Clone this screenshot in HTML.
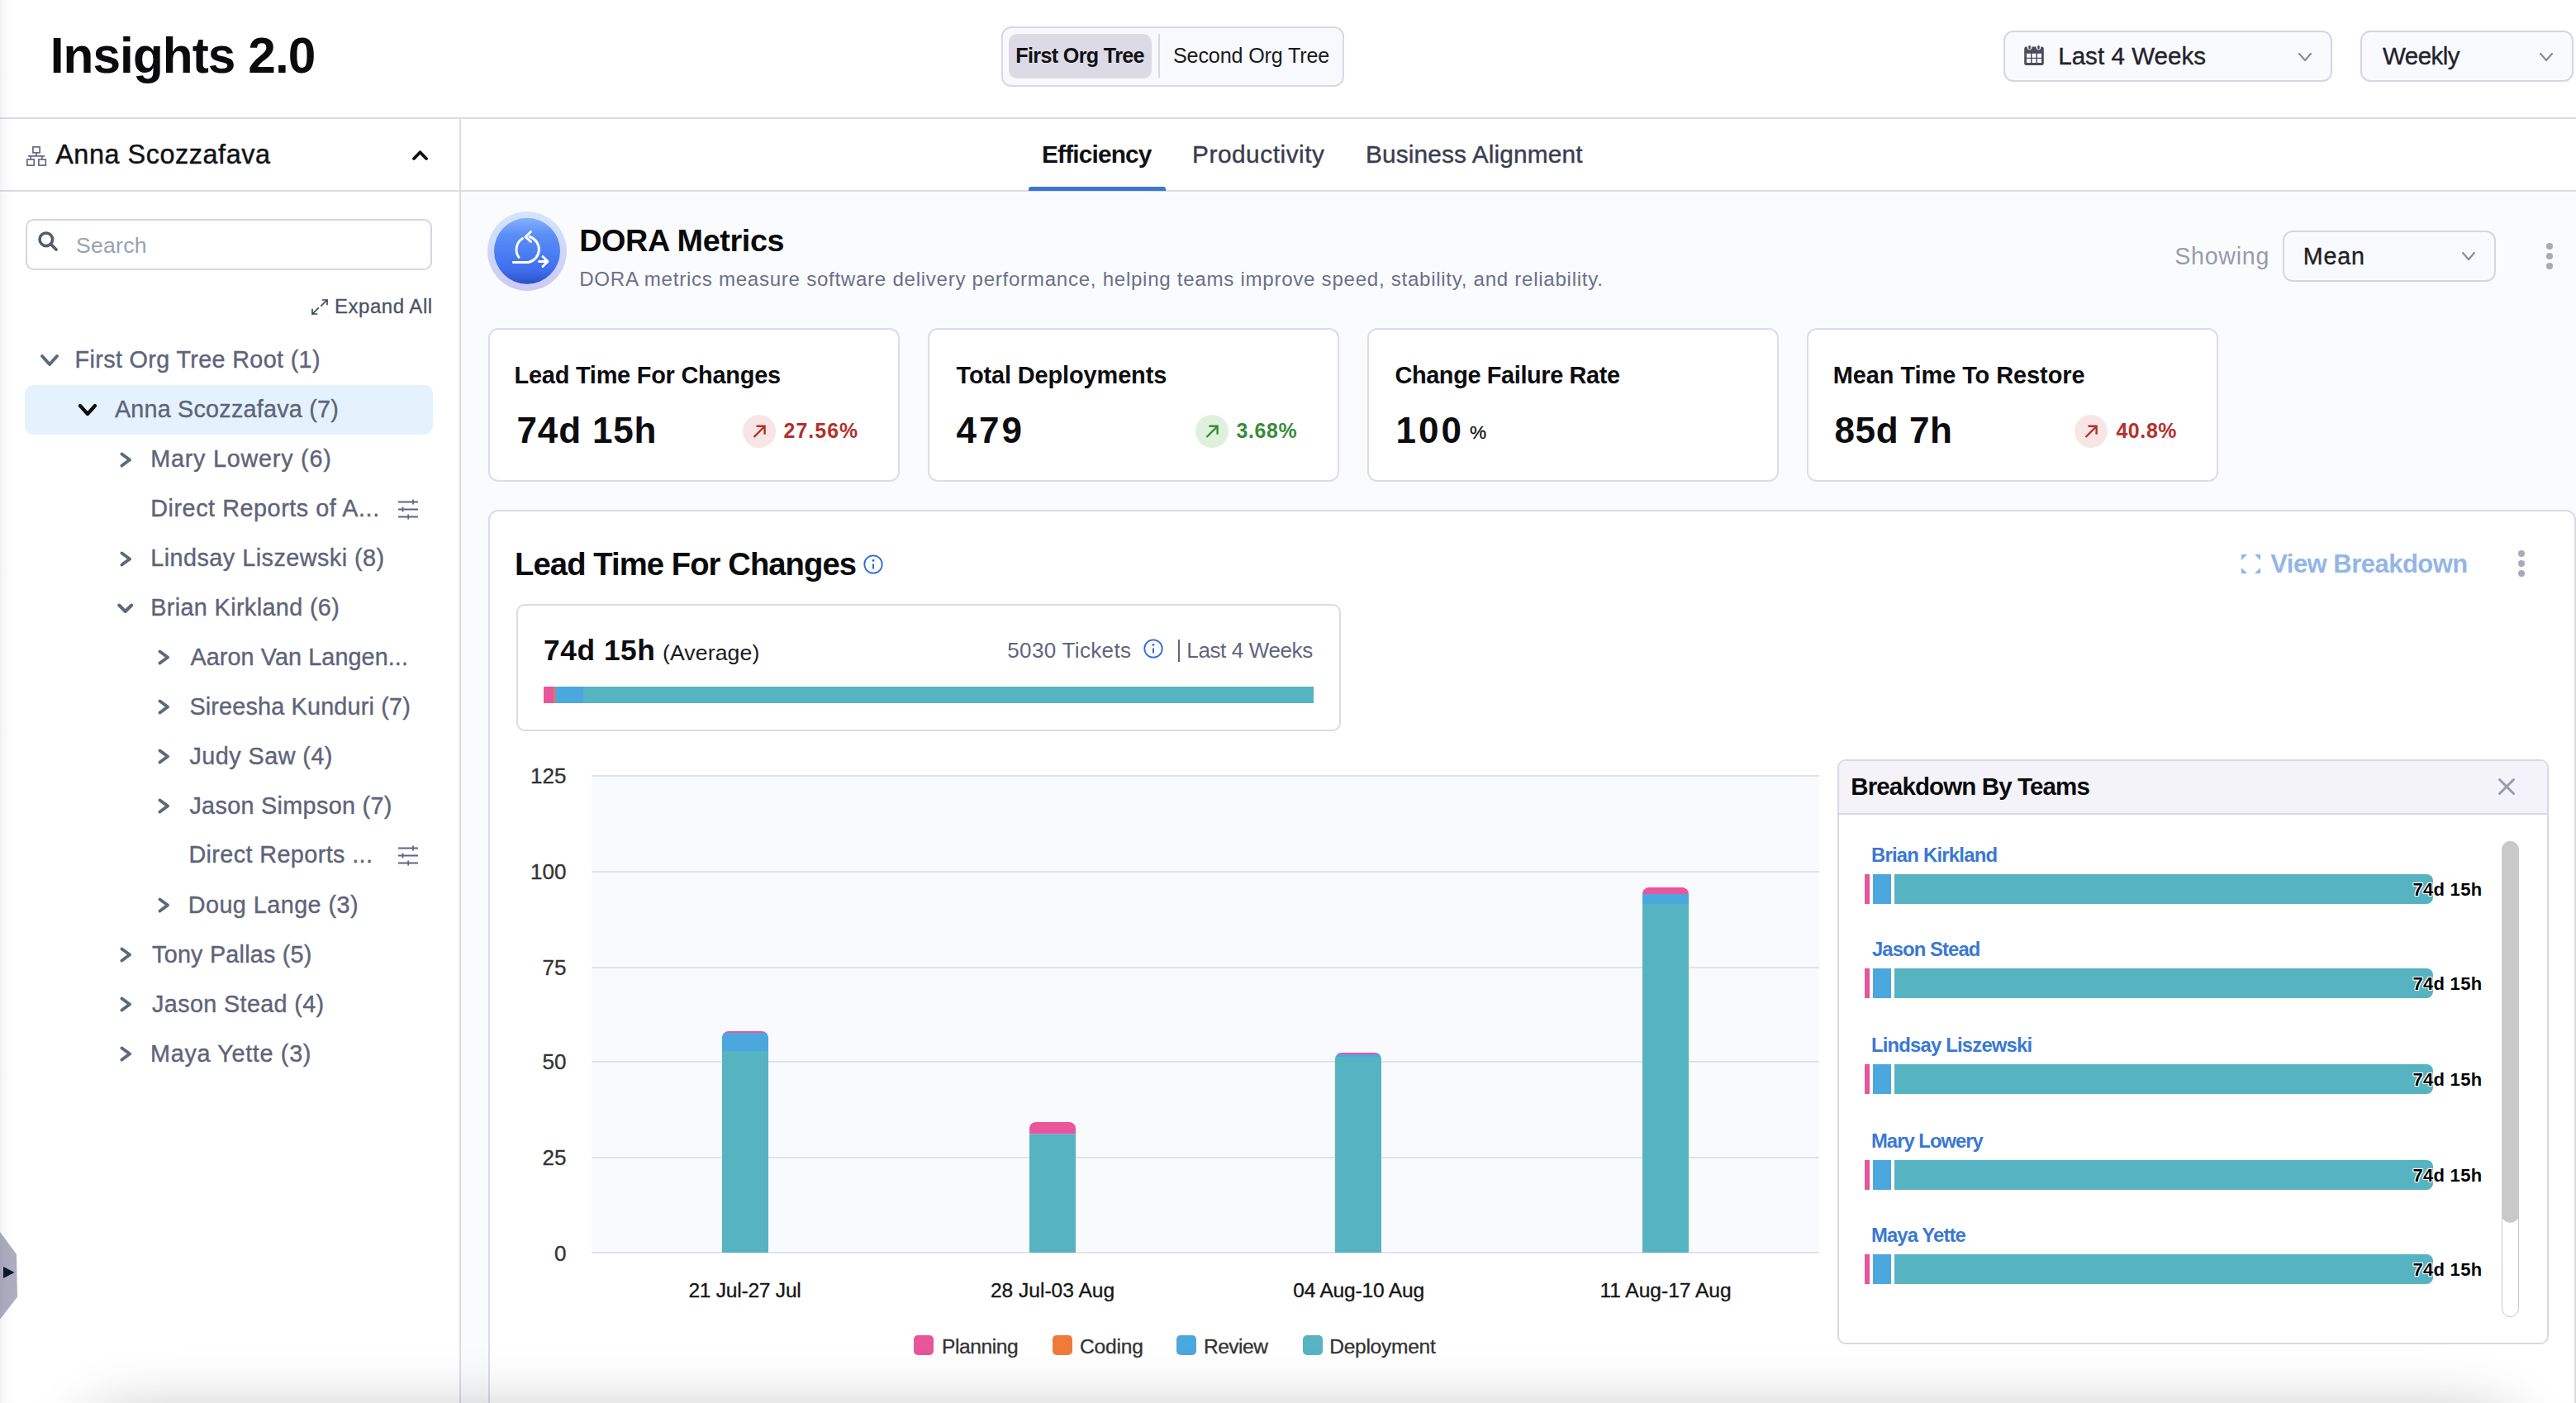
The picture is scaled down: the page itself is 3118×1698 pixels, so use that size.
<!DOCTYPE html>
<html><head><meta charset="utf-8"><style>
html,body{margin:0;padding:0;width:3118px;height:1698px;overflow:hidden;background:#fff;}
.root{position:relative;width:3118px;height:1698px;overflow:hidden;background:#fff;font-family:"Liberation Sans",sans-serif;}
.t{position:absolute;white-space:nowrap;line-height:1;}
.a{position:absolute;box-sizing:border-box;}

</style></head><body><div class="root">
<div class="a" style="left:558.0px;top:232.0px;width:2560.0px;height:1466.0px;background:#fafbfd"></div>
<div class="a" style="left:0.0px;top:142.0px;width:3118.0px;height:2.0px;background:#dcdbe6"></div>
<div class="a" style="left:556.0px;top:144.0px;width:2.0px;height:1554.0px;background:#dcdbe6"></div>
<div class="a" style="left:0.0px;top:230.0px;width:3118.0px;height:2.0px;background:#dcdbe6"></div>
<div class="a" style="left:1245.0px;top:226.0px;width:166.0px;height:5.0px;background:#3578d6;border-radius:3px 3px 0 0"></div>
<div class="a" style="left:1211.5px;top:31.6px;width:415.5px;height:73.0px;border:2px solid #d9d8e3;border-radius:12px;background:#f8f9fc"></div>
<div class="a" style="left:1221.0px;top:41.2px;width:173.0px;height:53.4px;background:#dcdbe5;border-radius:10px"></div>
<div class="a" style="left:1402.0px;top:41.0px;width:2.0px;height:53.0px;background:#d9d8e3"></div>
<div class="a" style="left:2424.5px;top:36.5px;width:398.5px;height:62.5px;border:2px solid #d6d5e1;border-radius:12px;background:#f9fafd"></div>
<div class="a" style="left:2856.5px;top:36.5px;width:258.5px;height:62.5px;border:2px solid #d6d5e1;border-radius:12px;background:#f9fafd"></div>
<svg style="position:absolute;left:2782.0px;top:63.5px;overflow:visible" width="16" height="10" viewBox="0 0 16 10"><path d="M1 1 L8 9 L15 1" fill="none" stroke="#8a8aa0" stroke-width="2.2" stroke-linecap="round" stroke-linejoin="round"/></svg>
<svg style="position:absolute;left:3074.0px;top:63.5px;overflow:visible" width="16" height="10" viewBox="0 0 16 10"><path d="M1 1 L8 9 L15 1" fill="none" stroke="#8a8aa0" stroke-width="2.2" stroke-linecap="round" stroke-linejoin="round"/></svg>
<svg style="position:absolute;left:2450.0px;top:55.0px;overflow:visible" width="24" height="24" viewBox="0 0 24 24"><path d="M0.2 4 Q0.2 1.5 2.5 1.5 H21.5 Q23.8 1.5 23.8 4 V22 Q23.8 24 21.5 24 H2.5 Q0.2 24 0.2 22 Z" fill="#4a4d5e"/>
<circle cx="6.6" cy="2.6" r="2.8" fill="#f9fafd"/><circle cx="17.4" cy="2.6" r="2.8" fill="#f9fafd"/>
<rect x="5.4" y="0" width="2.5" height="4.6" rx="1.2" fill="#4a4d5e"/><rect x="16.2" y="0" width="2.5" height="4.6" rx="1.2" fill="#4a4d5e"/>
<g fill="#f9fafd"><rect x="3" y="9.8" width="5" height="5"/><rect x="9.5" y="9.8" width="5" height="5"/><rect x="16" y="9.8" width="5" height="5"/>
<rect x="3" y="16" width="5" height="5"/><rect x="9.5" y="16" width="5" height="5"/><rect x="16" y="16" width="5" height="5"/></g></svg>
<svg style="position:absolute;left:32.0px;top:177.0px;overflow:visible" width="24" height="24" viewBox="0 0 24 24"><g fill="none" stroke="#646a85" stroke-width="1.7">
<rect x="7.9" y="0.85" width="8.2" height="7" /><path d="M12 7.9 V11.8 M2 11.8 H22 M5.2 11.8 V16 M18.9 11.8 V16"/>
<rect x="0.85" y="16" width="8.4" height="7.1"/><rect x="14.9" y="16" width="8.4" height="7.1"/></g></svg>
<svg style="position:absolute;left:499.0px;top:181.5px;overflow:visible" width="19" height="12" viewBox="0 0 19 12"><path d="M2 10 L9.5 2.2 L17 10" fill="none" stroke="#111" stroke-width="3.8" stroke-linecap="round" stroke-linejoin="round"/></svg>
<div class="a" style="left:30.6px;top:264.8px;width:492.4px;height:62.2px;border:2px solid #d6d5e1;border-radius:10px;background:#fff"></div>
<svg style="position:absolute;left:46.0px;top:280.0px;overflow:visible" width="24" height="24" viewBox="0 0 24 24"><circle cx="9.8" cy="9.8" r="7.8" fill="none" stroke="#555b70" stroke-width="3.6"/><path d="M15.5 15.5 L22 22" stroke="#555b70" stroke-width="3.8" stroke-linecap="round"/></svg>
<svg style="position:absolute;left:377.0px;top:361.5px;overflow:visible" width="20" height="19" viewBox="0 0 20 19"><g fill="none" stroke="#3d4a5c" stroke-width="1.7" stroke-linecap="square"><path d="M13.5 1 H19 V6.5 M19 1 L11.8 8"/><path d="M1 12.5 V18 H6.5 M1 18 L8.2 11"/></g></svg>
<div class="a" style="left:30.0px;top:466.0px;width:494.0px;height:59.6px;background:#e5f2fd;border-radius:10px"></div>
<svg style="position:absolute;left:50.0px;top:430.0px;overflow:visible" width="20" height="12" viewBox="0 0 20 12"><path d="M1 1 L10 11 L19 1" fill="none" stroke="#5a6a7b" stroke-width="4" stroke-linecap="round" stroke-linejoin="round"/></svg>
<svg style="position:absolute;left:96.0px;top:490.0px;overflow:visible" width="20" height="12" viewBox="0 0 20 12"><path d="M1 1 L10 11 L19 1" fill="none" stroke="#0b0b0b" stroke-width="4.3" stroke-linecap="round" stroke-linejoin="round"/></svg>
<svg style="position:absolute;left:144.6px;top:546.8px;overflow:visible" width="15" height="19" viewBox="0 0 15 19"><path d="M2.5 2.5 L12 9.5 L2.5 16.5" fill="none" stroke="#5a6a7b" stroke-width="4" stroke-linecap="round" stroke-linejoin="round"/></svg>
<svg style="position:absolute;left:144.6px;top:666.5px;overflow:visible" width="15" height="19" viewBox="0 0 15 19"><path d="M2.5 2.5 L12 9.5 L2.5 16.5" fill="none" stroke="#5a6a7b" stroke-width="4" stroke-linecap="round" stroke-linejoin="round"/></svg>
<svg style="position:absolute;left:144.6px;top:1146.3px;overflow:visible" width="15" height="19" viewBox="0 0 15 19"><path d="M2.5 2.5 L12 9.5 L2.5 16.5" fill="none" stroke="#5a6a7b" stroke-width="4" stroke-linecap="round" stroke-linejoin="round"/></svg>
<svg style="position:absolute;left:144.6px;top:1206.0px;overflow:visible" width="15" height="19" viewBox="0 0 15 19"><path d="M2.5 2.5 L12 9.5 L2.5 16.5" fill="none" stroke="#5a6a7b" stroke-width="4" stroke-linecap="round" stroke-linejoin="round"/></svg>
<svg style="position:absolute;left:144.6px;top:1266.0px;overflow:visible" width="15" height="19" viewBox="0 0 15 19"><path d="M2.5 2.5 L12 9.5 L2.5 16.5" fill="none" stroke="#5a6a7b" stroke-width="4" stroke-linecap="round" stroke-linejoin="round"/></svg>
<svg style="position:absolute;left:190.8px;top:786.3px;overflow:visible" width="15" height="19" viewBox="0 0 15 19"><path d="M2.5 2.5 L12 9.5 L2.5 16.5" fill="none" stroke="#5a6a7b" stroke-width="4" stroke-linecap="round" stroke-linejoin="round"/></svg>
<svg style="position:absolute;left:190.8px;top:846.1px;overflow:visible" width="15" height="19" viewBox="0 0 15 19"><path d="M2.5 2.5 L12 9.5 L2.5 16.5" fill="none" stroke="#5a6a7b" stroke-width="4" stroke-linecap="round" stroke-linejoin="round"/></svg>
<svg style="position:absolute;left:190.8px;top:905.9px;overflow:visible" width="15" height="19" viewBox="0 0 15 19"><path d="M2.5 2.5 L12 9.5 L2.5 16.5" fill="none" stroke="#5a6a7b" stroke-width="4" stroke-linecap="round" stroke-linejoin="round"/></svg>
<svg style="position:absolute;left:190.8px;top:965.9px;overflow:visible" width="15" height="19" viewBox="0 0 15 19"><path d="M2.5 2.5 L12 9.5 L2.5 16.5" fill="none" stroke="#5a6a7b" stroke-width="4" stroke-linecap="round" stroke-linejoin="round"/></svg>
<svg style="position:absolute;left:190.8px;top:1086.3px;overflow:visible" width="15" height="19" viewBox="0 0 15 19"><path d="M2.5 2.5 L12 9.5 L2.5 16.5" fill="none" stroke="#5a6a7b" stroke-width="4" stroke-linecap="round" stroke-linejoin="round"/></svg>
<svg style="position:absolute;left:142.0px;top:730.0px;overflow:visible" width="19" height="13" viewBox="0 0 19 13"><path d="M2.2 2.5 L9.7 10 L17.2 2.5" fill="none" stroke="#5a6a7b" stroke-width="4" stroke-linecap="round" stroke-linejoin="round"/></svg>
<svg style="position:absolute;left:481.0px;top:603.5px;overflow:visible" width="26" height="26" viewBox="0 0 26 26"><g stroke="#5f6580" stroke-width="1.8" fill="none"><path d="M1 3.5 H25 M1 12.5 H25 M1 21.5 H25"/>
    <path d="M19 0.5 V6.5 M6.5 9.5 V15.5 M13.2 18.5 V24.5"/></g></svg>
<svg style="position:absolute;left:481.0px;top:1023.3px;overflow:visible" width="26" height="26" viewBox="0 0 26 26"><g stroke="#5f6580" stroke-width="1.8" fill="none"><path d="M1 3.5 H25 M1 12.5 H25 M1 21.5 H25"/>
    <path d="M19 0.5 V6.5 M6.5 9.5 V15.5 M13.2 18.5 V24.5"/></g></svg>
<svg style="position:absolute;left:0.0px;top:1488.0px;overflow:visible" width="24" height="112" viewBox="0 0 24 112"><path d="M0 3 L20 30 L21 81.5 L0 108.7 Z" fill="#adadc0"/><path d="M4 45 L17.6 52 L4 59 Z" fill="#0f172a"/></svg>
<svg style="position:absolute;left:590.0px;top:256.0px;overflow:visible" width="96" height="96" viewBox="0 0 96 96"><defs>
<linearGradient id="ring" x1="0" y1="0" x2="0" y2="1"><stop offset="0" stop-color="#d4e4fb"/><stop offset="1" stop-color="#cdc9f5"/></linearGradient>
<linearGradient id="core" x1="0" y1="0" x2="0" y2="1"><stop offset="0" stop-color="#86b0f8"/><stop offset="0.25" stop-color="#5b8ff6"/><stop offset="0.55" stop-color="#4a7ef4"/><stop offset="0.8" stop-color="#3f6cec"/><stop offset="1" stop-color="#2751c4"/></linearGradient>
</defs>
<circle cx="48" cy="48" r="48" fill="url(#ring)"/>
<circle cx="48" cy="47.8" r="40" fill="url(#core)"/>
<g fill="none" stroke="#fff" stroke-width="2.9" stroke-linecap="round" stroke-linejoin="round">
<path d="M38 55.4 A16 16 0 0 1 42.6 32.5"/>
<path d="M51 30.5 A16 16 0 0 1 49.5 61.5 H31.3"/>
<path d="M52.5 24.5 L46 30.7 L52.5 36.5"/>
<path d="M62.4 60.5 H73 M67 54.5 L73 60.5 L67 66.5"/>
</g></svg>
<div class="a" style="left:2762.6px;top:278.6px;width:258.8px;height:62.4px;border:2px solid #d6d5e1;border-radius:12px;background:#f9fafd"></div>
<svg style="position:absolute;left:2980.0px;top:305.0px;overflow:visible" width="16" height="10" viewBox="0 0 16 10"><path d="M1 1 L8 9 L15 1" fill="none" stroke="#8a8aa0" stroke-width="2.2" stroke-linecap="round" stroke-linejoin="round"/></svg>
<div class="a" style="left:3082.0px;top:293.7px;width:8.0px;height:8.0px;background:#a9a9bb;border-radius:50%"></div>
<div class="a" style="left:3082.0px;top:305.9px;width:8.0px;height:8.0px;background:#a9a9bb;border-radius:50%"></div>
<div class="a" style="left:3082.0px;top:318.1px;width:8.0px;height:8.0px;background:#a9a9bb;border-radius:50%"></div>
<div class="a" style="left:590.7px;top:397.0px;width:498.3px;height:186.0px;border:2px solid #dddce7;border-radius:12px;background:#fff"></div>
<div class="a" style="left:1123.0px;top:397.0px;width:498.0px;height:186.0px;border:2px solid #dddce7;border-radius:12px;background:#fff"></div>
<div class="a" style="left:1654.8px;top:397.0px;width:498.2px;height:186.0px;border:2px solid #dddce7;border-radius:12px;background:#fff"></div>
<div class="a" style="left:2187.0px;top:397.0px;width:498.0px;height:186.0px;border:2px solid #dddce7;border-radius:12px;background:#fff"></div>
<div class="a" style="left:899.0px;top:502.1px;width:39.8px;height:39.8px;background:#f8e6e6;border-radius:50%"></div>
<svg style="position:absolute;left:909.9px;top:513.0px;overflow:visible" width="18" height="18" viewBox="0 0 18 18"><path d="M2.5 16 L15.5 3 M5.5 2.8 H15.6 V12.8" fill="none" stroke="#b3302b" stroke-width="2.4"/></svg>
<div class="a" style="left:1446.9px;top:502.1px;width:39.8px;height:39.8px;background:#dff1dc;border-radius:50%"></div>
<svg style="position:absolute;left:1457.8px;top:513.0px;overflow:visible" width="18" height="18" viewBox="0 0 18 18"><path d="M2.5 16 L15.5 3 M5.5 2.8 H15.6 V12.8" fill="none" stroke="#3b8a3a" stroke-width="2.4"/></svg>
<div class="a" style="left:2511.0px;top:502.1px;width:39.8px;height:39.8px;background:#f8e6e6;border-radius:50%"></div>
<svg style="position:absolute;left:2521.9px;top:513.0px;overflow:visible" width="18" height="18" viewBox="0 0 18 18"><path d="M2.5 16 L15.5 3 M5.5 2.8 H15.6 V12.8" fill="none" stroke="#b3302b" stroke-width="2.4"/></svg>
<div class="a" style="left:590.8px;top:617.0px;width:2527.2px;height:1143.0px;border:2px solid #dcdbe6;border-radius:12px;background:#fff"></div>
<svg style="position:absolute;left:1045.2px;top:670.6px;overflow:visible" width="24" height="24" viewBox="0 0 24 24"><circle cx="12" cy="12" r="10.7" fill="none" stroke="#2d6cd2" stroke-width="1.8"/><circle cx="12" cy="7.4" r="1.4" fill="#2d6cd2"/><path d="M12 11.5 V17.6" stroke="#2d6cd2" stroke-width="2"/></svg>
<svg style="position:absolute;left:2712.6px;top:670.8px;overflow:visible" width="23" height="23" viewBox="0 0 23 23"><g fill="#93b6e6"><path d="M0 0 H7 L0 7 Z"/><path d="M23 0 V7 L16 0 Z"/><path d="M0 23 V16 L7 23 Z"/><path d="M23 23 H16 L23 16 Z"/></g></svg>
<div class="a" style="left:3048.0px;top:666.0px;width:8.0px;height:8.0px;background:#a9a9bb;border-radius:50%"></div>
<div class="a" style="left:3048.0px;top:678.2px;width:8.0px;height:8.0px;background:#a9a9bb;border-radius:50%"></div>
<div class="a" style="left:3048.0px;top:690.4px;width:8.0px;height:8.0px;background:#a9a9bb;border-radius:50%"></div>
<div class="a" style="left:624.9px;top:731.0px;width:998.1px;height:154.0px;border:2px solid #dcdbe6;border-radius:10px;background:#fff"></div>
<svg style="position:absolute;left:1383.7px;top:773.0px;overflow:visible" width="24" height="24" viewBox="0 0 24 24"><circle cx="12" cy="12" r="10.7" fill="none" stroke="#2d6cd2" stroke-width="1.8"/><circle cx="12" cy="7.4" r="1.4" fill="#2d6cd2"/><path d="M12 11.5 V17.6" stroke="#2d6cd2" stroke-width="2"/></svg>
<div class="a" style="left:1425.5px;top:773.6px;width:2.0px;height:27.9px;background:#5f6580"></div>
<div class="a" style="left:658.0px;top:831.0px;width:12.0px;height:20.0px;background:#e8559b"></div>
<div class="a" style="left:670.0px;top:831.0px;width:2.0px;height:20.0px;background:#ee7a3b"></div>
<div class="a" style="left:672.0px;top:831.0px;width:34.0px;height:20.0px;background:#4ba8de"></div>
<div class="a" style="left:706.0px;top:831.0px;width:884.0px;height:20.0px;background:#55b3c2"></div>
<div class="a" style="left:716.0px;top:938.5px;width:1486.0px;height:577.8px;background:#f9fafe"></div>
<div class="a" style="left:716.0px;top:937.5px;width:1486.0px;height:2.0px;background:#e3e3e7"></div>
<div class="a" style="left:716.0px;top:1053.8px;width:1486.0px;height:2.0px;background:#e3e3e7"></div>
<div class="a" style="left:716.0px;top:1169.6px;width:1486.0px;height:2.0px;background:#e3e3e7"></div>
<div class="a" style="left:716.0px;top:1284.0px;width:1486.0px;height:2.0px;background:#e3e3e7"></div>
<div class="a" style="left:716.0px;top:1399.7px;width:1486.0px;height:2.0px;background:#e3e3e7"></div>
<div class="a" style="left:716.0px;top:1515.3px;width:1486.0px;height:2.0px;background:#e3e3e7"></div>
<div class="a" style="left:874.0px;top:1248.0px;width:56px;height:268.3px;border-radius:8px 8px 0 0;overflow:hidden"><div style="position:absolute;left:0;right:0;top:0.0px;height:2.2px;background:#ea559c"></div><div style="position:absolute;left:0;right:0;top:2.2px;height:21.8px;background:#4ba8de"></div><div style="position:absolute;left:0;right:0;top:24.0px;height:244.3px;background:#55b3c2"></div></div>
<div class="a" style="left:1246.0px;top:1358.0px;width:56px;height:158.3px;border-radius:8px 8px 0 0;overflow:hidden"><div style="position:absolute;left:0;right:0;top:0.0px;height:13.5px;background:#ea559c"></div><div style="position:absolute;left:0;right:0;top:13.5px;height:1.0px;background:#7fb8d8"></div><div style="position:absolute;left:0;right:0;top:14.5px;height:143.8px;background:#55b3c2"></div></div>
<div class="a" style="left:1616.0px;top:1273.5px;width:56px;height:242.8px;border-radius:8px 8px 0 0;overflow:hidden"><div style="position:absolute;left:0;right:0;top:0.0px;height:2.5px;background:#ea559c"></div><div style="position:absolute;left:0;right:0;top:2.5px;height:3.0px;background:#4ba8de"></div><div style="position:absolute;left:0;right:0;top:5.5px;height:237.3px;background:#55b3c2"></div></div>
<div class="a" style="left:1988.0px;top:1073.9px;width:56px;height:442.4px;border-radius:8px 8px 0 0;overflow:hidden"><div style="position:absolute;left:0;right:0;top:0.0px;height:8.1px;background:#ea559c"></div><div style="position:absolute;left:0;right:0;top:8.1px;height:12.0px;background:#4ba8de"></div><div style="position:absolute;left:0;right:0;top:20.1px;height:422.3px;background:#55b3c2"></div></div>
<div class="a" style="left:1106.0px;top:1616.0px;width:24.0px;height:24.0px;background:#e8559b;border-radius:5px"></div>
<div class="a" style="left:1273.6px;top:1616.0px;width:24.0px;height:24.0px;background:#ee7a3b;border-radius:5px"></div>
<div class="a" style="left:1423.7px;top:1616.0px;width:24.0px;height:24.0px;background:#4ba8de;border-radius:5px"></div>
<div class="a" style="left:1576.6px;top:1616.0px;width:24.0px;height:24.0px;background:#55b3c2;border-radius:5px"></div>
<div class="a" style="left:2224.0px;top:918.5px;width:861.0px;height:708.5px;border:2px solid #d9d8e3;border-radius:10px;background:#fff"></div>
<div class="a" style="left:2226.0px;top:920.5px;width:857.0px;height:63.5px;background:#f3f3f9;border-radius:8px 8px 0 0"></div>
<div class="a" style="left:2226.0px;top:984.0px;width:857.0px;height:2.0px;background:#d9d8e3"></div>
<svg style="position:absolute;left:3024.0px;top:942.0px;overflow:visible" width="20" height="20" viewBox="0 0 20 20"><path d="M1.5 1.5 L18.5 18.5 M18.5 1.5 L1.5 18.5" stroke="#9a9aae" stroke-width="3" stroke-linecap="round"/></svg>
<div class="a" style="left:2257.0px;top:1058.0px;width:6.0px;height:36.0px;background:#e8559b"></div>
<div class="a" style="left:2267.0px;top:1058.0px;width:22.0px;height:36.0px;background:#4ba8de"></div>
<div class="a" style="left:2293.0px;top:1058.0px;width:652.0px;height:36.0px;background:#55b3c2;border-radius:0 8px 8px 0"></div>
<div class="a" style="left:2257.0px;top:1172.0px;width:6.0px;height:36.0px;background:#e8559b"></div>
<div class="a" style="left:2267.0px;top:1172.0px;width:22.0px;height:36.0px;background:#4ba8de"></div>
<div class="a" style="left:2293.0px;top:1172.0px;width:652.0px;height:36.0px;background:#55b3c2;border-radius:0 8px 8px 0"></div>
<div class="a" style="left:2257.0px;top:1288.0px;width:6.0px;height:36.0px;background:#e8559b"></div>
<div class="a" style="left:2267.0px;top:1288.0px;width:22.0px;height:36.0px;background:#4ba8de"></div>
<div class="a" style="left:2293.0px;top:1288.0px;width:652.0px;height:36.0px;background:#55b3c2;border-radius:0 8px 8px 0"></div>
<div class="a" style="left:2257.0px;top:1404.0px;width:6.0px;height:36.0px;background:#e8559b"></div>
<div class="a" style="left:2267.0px;top:1404.0px;width:22.0px;height:36.0px;background:#4ba8de"></div>
<div class="a" style="left:2293.0px;top:1404.0px;width:652.0px;height:36.0px;background:#55b3c2;border-radius:0 8px 8px 0"></div>
<div class="a" style="left:2257.0px;top:1518.0px;width:6.0px;height:36.0px;background:#e8559b"></div>
<div class="a" style="left:2267.0px;top:1518.0px;width:22.0px;height:36.0px;background:#4ba8de"></div>
<div class="a" style="left:2293.0px;top:1518.0px;width:652.0px;height:36.0px;background:#55b3c2;border-radius:0 8px 8px 0"></div>
<div class="a" style="left:3027.5px;top:1018.0px;width:21.5px;height:576.0px;border:1.5px solid #c6c6c6;border-radius:11px"></div>
<div class="a" style="left:3027.5px;top:1018.0px;width:21.5px;height:462.0px;background:#c9c9c9;border-radius:11px"></div>
<div class="a" style="left:0.0px;top:0.0px;width:18.0px;height:1698.0px;background:linear-gradient(to right,rgba(0,0,0,0.05),rgba(0,0,0,0.028) 25%,rgba(0,0,0,0.01) 60%,rgba(0,0,0,0));pointer-events:none;z-index:5"></div>
<div class="a" style="left:110px;top:1735px;width:2930px;height:120px;border-radius:60px;background:#000;box-shadow:0 0 70px 30px rgba(0,0,0,0.22);z-index:6;pointer-events:none"></div>
<div class="t" style="top:37.11px;font-size:60.32px;color:#0b0b0e;letter-spacing:-0.927px;font-weight:700;left:60.70px;">Insights 2.0</div>
<div class="t" style="top:54.82px;font-size:25.15px;color:#111115;letter-spacing:-0.662px;font-weight:700;left:1229.30px;">First Org Tree</div>
<div class="t" style="top:54.82px;font-size:25.15px;color:#1b1b20;letter-spacing:-0.157px;font-weight:400;left:1420.00px;">Second Org Tree</div>
<div class="t" style="top:53.00px;font-size:29.51px;color:#22232b;letter-spacing:0.055px;font-weight:400;-webkit-text-stroke:0.38px #22232b;left:2491.20px;">Last 4 Weeks</div>
<div class="t" style="top:53.00px;font-size:29.51px;color:#22232b;letter-spacing:-0.520px;font-weight:400;-webkit-text-stroke:0.38px #22232b;left:2884.00px;">Weekly</div>
<div class="t" style="top:170.82px;font-size:32.41px;color:#111115;letter-spacing:0.543px;font-weight:400;-webkit-text-stroke:0.42px #111115;left:67.20px;">Anna Scozzafava</div>
<div class="t" style="top:284.01px;font-size:26.60px;color:#98a2b3;letter-spacing:0.240px;font-weight:400;left:92.00px;">Search</div>
<div class="t" style="top:358.90px;font-size:23.98px;color:#4a5264;letter-spacing:0.533px;font-weight:400;-webkit-text-stroke:0.31px #4a5264;left:405.00px;">Expand All</div>
<div class="t" style="top:420.61px;font-size:28.78px;color:#5e6479;letter-spacing:0.345px;font-weight:400;-webkit-text-stroke:0.37px #5e6479;left:90.60px;">First Org Tree Root (1)</div>
<div class="t" style="top:480.82px;font-size:28.78px;color:#5e6479;letter-spacing:0.211px;font-weight:400;-webkit-text-stroke:0.37px #5e6479;left:138.90px;">Anna Scozzafava (7)</div>
<div class="t" style="top:541.40px;font-size:28.78px;color:#5e6479;letter-spacing:0.771px;font-weight:400;-webkit-text-stroke:0.37px #5e6479;left:182.20px;">Mary Lowery (6)</div>
<div class="t" style="top:601.40px;font-size:28.78px;color:#5e6479;letter-spacing:0.552px;font-weight:400;-webkit-text-stroke:0.37px #5e6479;left:182.20px;">Direct Reports of A...</div>
<div class="t" style="top:661.11px;font-size:28.78px;color:#5e6479;letter-spacing:0.480px;font-weight:400;-webkit-text-stroke:0.37px #5e6479;left:182.20px;">Lindsay Liszewski (8)</div>
<div class="t" style="top:720.90px;font-size:28.78px;color:#5e6479;letter-spacing:0.376px;font-weight:400;-webkit-text-stroke:0.37px #5e6479;left:182.20px;">Brian Kirkland (6)</div>
<div class="t" style="top:780.90px;font-size:28.78px;color:#5e6479;letter-spacing:0.100px;font-weight:400;-webkit-text-stroke:0.37px #5e6479;left:230.40px;">Aaron Van Langen...</div>
<div class="t" style="top:840.70px;font-size:28.78px;color:#5e6479;letter-spacing:0.189px;font-weight:400;-webkit-text-stroke:0.37px #5e6479;left:229.40px;">Sireesha Kunduri (7)</div>
<div class="t" style="top:900.51px;font-size:28.78px;color:#5e6479;letter-spacing:0.473px;font-weight:400;-webkit-text-stroke:0.37px #5e6479;left:229.40px;">Judy Saw (4)</div>
<div class="t" style="top:960.51px;font-size:28.78px;color:#5e6479;letter-spacing:0.325px;font-weight:400;-webkit-text-stroke:0.37px #5e6479;left:229.40px;">Jason Simpson (7)</div>
<div class="t" style="top:1020.32px;font-size:28.78px;color:#5e6479;letter-spacing:0.400px;font-weight:400;-webkit-text-stroke:0.37px #5e6479;left:228.40px;">Direct Reports ...</div>
<div class="t" style="top:1080.90px;font-size:28.78px;color:#5e6479;letter-spacing:0.462px;font-weight:400;-webkit-text-stroke:0.37px #5e6479;left:227.70px;">Doug Lange (3)</div>
<div class="t" style="top:1140.90px;font-size:28.78px;color:#5e6479;letter-spacing:0.214px;font-weight:400;-webkit-text-stroke:0.37px #5e6479;left:184.10px;">Tony Pallas (5)</div>
<div class="t" style="top:1200.61px;font-size:28.78px;color:#5e6479;letter-spacing:0.357px;font-weight:400;-webkit-text-stroke:0.37px #5e6479;left:184.10px;">Jason Stead (4)</div>
<div class="t" style="top:1260.61px;font-size:28.78px;color:#5e6479;letter-spacing:0.677px;font-weight:400;-webkit-text-stroke:0.37px #5e6479;left:182.10px;">Maya Yette (3)</div>
<div class="t" style="top:171.61px;font-size:29.80px;color:#111115;letter-spacing:-0.822px;font-weight:700;left:1261.00px;">Efficiency</div>
<div class="t" style="top:171.61px;font-size:29.80px;color:#3a3d4f;letter-spacing:0.545px;font-weight:400;-webkit-text-stroke:0.39px #3a3d4f;left:1443.00px;">Productivity</div>
<div class="t" style="top:171.61px;font-size:29.80px;color:#3a3d4f;letter-spacing:0.141px;font-weight:400;-webkit-text-stroke:0.39px #3a3d4f;left:1653.00px;">Business Alignment</div>
<div class="t" style="top:273.11px;font-size:37.79px;color:#0a0a0c;letter-spacing:-0.382px;font-weight:700;left:701.20px;">DORA Metrics</div>
<div class="t" style="top:325.51px;font-size:24.13px;color:#6b7089;letter-spacing:0.708px;font-weight:400;left:701.20px;">DORA metrics measure software delivery performance, helping teams improve speed, stability, and reliability.</div>
<div class="t" style="top:295.81px;font-size:28.63px;color:#9a9aae;letter-spacing:0.700px;font-weight:400;left:2632.30px;">Showing</div>
<div class="t" style="top:296.01px;font-size:28.63px;color:#1e1f26;letter-spacing:0.800px;font-weight:400;-webkit-text-stroke:0.37px #1e1f26;left:2787.80px;">Mean</div>
<div class="t" style="top:440.41px;font-size:28.92px;color:#0d0d10;letter-spacing:-0.230px;font-weight:700;left:622.60px;">Lead Time For Changes</div>
<div class="t" style="top:499.40px;font-size:44.04px;color:#0d0d10;letter-spacing:0.833px;font-weight:700;left:625.50px;">74d 15h</div>
<div class="t" style="top:508.81px;font-size:24.86px;color:#b3302b;letter-spacing:1.040px;font-weight:700;left:948.60px;">27.56%</div>
<div class="t" style="top:440.41px;font-size:28.92px;color:#0d0d10;letter-spacing:-0.113px;font-weight:700;left:1157.60px;">Total Deployments</div>
<div class="t" style="top:499.40px;font-size:44.04px;color:#0d0d10;letter-spacing:3.000px;font-weight:700;left:1157.60px;">479</div>
<div class="t" style="top:508.81px;font-size:24.86px;color:#3b8a3a;letter-spacing:0.650px;font-weight:700;left:1496.50px;">3.68%</div>
<div class="t" style="top:440.41px;font-size:28.92px;color:#0d0d10;letter-spacing:-0.378px;font-weight:700;left:1688.40px;">Change Failure Rate</div>
<div class="t" style="top:499.40px;font-size:44.04px;color:#0d0d10;letter-spacing:3.000px;font-weight:700;left:1689.60px;">100</div>
<div class="t" style="top:512.40px;font-size:22.67px;color:#0d0d10;letter-spacing:0.000px;font-weight:400;-webkit-text-stroke:0.29px #0d0d10;left:1779.00px;">%</div>
<div class="t" style="top:440.41px;font-size:28.92px;color:#0d0d10;letter-spacing:-0.053px;font-weight:700;left:2218.80px;">Mean Time To Restore</div>
<div class="t" style="top:499.40px;font-size:44.04px;color:#0d0d10;letter-spacing:0.600px;font-weight:700;left:2220.50px;">85d 7h</div>
<div class="t" style="top:508.81px;font-size:24.86px;color:#b3302b;letter-spacing:0.650px;font-weight:700;left:2561.40px;">40.8%</div>
<div class="t" style="top:663.51px;font-size:38.23px;color:#0a0a0c;letter-spacing:-0.930px;font-weight:700;left:623.10px;">Lead Time For Changes</div>
<div class="t" style="top:667.81px;font-size:30.96px;color:#93b6e6;letter-spacing:-0.492px;font-weight:700;left:2748.20px;">View Breakdown</div>
<div class="t" style="top:769.41px;font-size:35.32px;color:#0d0d10;letter-spacing:0.533px;font-weight:700;left:658.10px;">74d 15h</div>
<div class="t" style="top:777.41px;font-size:26.60px;color:#1a1a20;letter-spacing:0.125px;font-weight:400;left:802.00px;">(Average)</div>
<div class="t" style="top:774.00px;font-size:26.02px;color:#5f6580;letter-spacing:0.327px;font-weight:400;left:1219.30px;">5030 Tickets</div>
<div class="t" style="top:774.00px;font-size:26.02px;color:#5f6580;letter-spacing:-0.382px;font-weight:400;left:1436.30px;">Last 4 Weeks</div>
<div class="t" style="top:925.81px;font-size:26.02px;color:#333333;letter-spacing:0.000px;font-weight:400;-webkit-text-stroke:0.34px #333333;right:2432.50px;">125</div>
<div class="t" style="top:1042.11px;font-size:26.02px;color:#333333;letter-spacing:0.000px;font-weight:400;-webkit-text-stroke:0.34px #333333;right:2432.50px;">100</div>
<div class="t" style="top:1157.90px;font-size:26.02px;color:#333333;letter-spacing:0.000px;font-weight:400;-webkit-text-stroke:0.34px #333333;right:2432.50px;">75</div>
<div class="t" style="top:1272.31px;font-size:26.02px;color:#333333;letter-spacing:0.000px;font-weight:400;-webkit-text-stroke:0.34px #333333;right:2432.50px;">50</div>
<div class="t" style="top:1388.00px;font-size:26.02px;color:#333333;letter-spacing:0.000px;font-weight:400;-webkit-text-stroke:0.34px #333333;right:2432.50px;">25</div>
<div class="t" style="top:1503.61px;font-size:26.02px;color:#333333;letter-spacing:0.000px;font-weight:400;-webkit-text-stroke:0.34px #333333;right:2432.50px;">0</div>
<div class="t" style="top:1550.01px;font-size:24.56px;color:#161616;letter-spacing:-0.233px;font-weight:400;-webkit-text-stroke:0.32px #161616;left:833.40px;">21 Jul-27 Jul</div>
<div class="t" style="top:1550.01px;font-size:24.56px;color:#161616;letter-spacing:0.000px;font-weight:400;-webkit-text-stroke:0.32px #161616;left:1274.00px;transform:translateX(-50%);">28 Jul-03 Aug</div>
<div class="t" style="top:1550.01px;font-size:24.56px;color:#161616;letter-spacing:-0.183px;font-weight:400;-webkit-text-stroke:0.32px #161616;left:1565.20px;">04 Aug-10 Aug</div>
<div class="t" style="top:1550.01px;font-size:24.56px;color:#161616;letter-spacing:0.000px;font-weight:400;-webkit-text-stroke:0.32px #161616;left:2016.00px;transform:translateX(-50%);">11 Aug-17 Aug</div>
<div class="t" style="top:1618.01px;font-size:24.56px;color:#333333;letter-spacing:-0.400px;font-weight:400;-webkit-text-stroke:0.32px #333333;left:1140.00px;">Planning</div>
<div class="t" style="top:1618.01px;font-size:24.56px;color:#333333;letter-spacing:-0.200px;font-weight:400;-webkit-text-stroke:0.32px #333333;left:1307.10px;">Coding</div>
<div class="t" style="top:1618.01px;font-size:24.56px;color:#333333;letter-spacing:-0.520px;font-weight:400;-webkit-text-stroke:0.32px #333333;left:1457.00px;">Review</div>
<div class="t" style="top:1618.01px;font-size:24.56px;color:#333333;letter-spacing:-0.267px;font-weight:400;-webkit-text-stroke:0.32px #333333;left:1609.20px;">Deployment</div>
<div class="t" style="top:937.00px;font-size:29.51px;color:#0a0a0c;letter-spacing:-0.871px;font-weight:700;left:2240.30px;">Breakdown By Teams</div>
<div class="t" style="top:1022.50px;font-size:23.84px;color:#3a78d3;letter-spacing:-0.754px;font-weight:700;left:2265.00px;">Brian Kirkland</div>
<div class="t" style="top:1066.01px;font-size:21.95px;color:#000000;letter-spacing:0.333px;font-weight:700;text-shadow:0 0 2px #fff,0 0 2px #fff,1px 1px 0 #fff,-1px -1px 0 #fff,1px -1px 0 #fff,-1px 1px 0 #fff;left:2920.40px;">74d 15h</div>
<div class="t" style="top:1136.81px;font-size:23.84px;color:#3a78d3;letter-spacing:-0.900px;font-weight:700;left:2266.00px;">Jason Stead</div>
<div class="t" style="top:1180.30px;font-size:21.95px;color:#000000;letter-spacing:0.333px;font-weight:700;text-shadow:0 0 2px #fff,0 0 2px #fff,1px 1px 0 #fff,-1px -1px 0 #fff,1px -1px 0 #fff,-1px 1px 0 #fff;left:2920.40px;">74d 15h</div>
<div class="t" style="top:1252.81px;font-size:23.84px;color:#3a78d3;letter-spacing:-0.800px;font-weight:700;left:2265.00px;">Lindsay Liszewski</div>
<div class="t" style="top:1296.30px;font-size:21.95px;color:#000000;letter-spacing:0.333px;font-weight:700;text-shadow:0 0 2px #fff,0 0 2px #fff,1px 1px 0 #fff,-1px -1px 0 #fff,1px -1px 0 #fff,-1px 1px 0 #fff;left:2920.40px;">74d 15h</div>
<div class="t" style="top:1368.61px;font-size:23.84px;color:#3a78d3;letter-spacing:-0.980px;font-weight:700;left:2265.00px;">Mary Lowery</div>
<div class="t" style="top:1412.10px;font-size:21.95px;color:#000000;letter-spacing:0.333px;font-weight:700;text-shadow:0 0 2px #fff,0 0 2px #fff,1px 1px 0 #fff,-1px -1px 0 #fff,1px -1px 0 #fff,-1px 1px 0 #fff;left:2920.40px;">74d 15h</div>
<div class="t" style="top:1482.61px;font-size:23.84px;color:#3a78d3;letter-spacing:-0.889px;font-weight:700;left:2265.00px;">Maya Yette</div>
<div class="t" style="top:1526.10px;font-size:21.95px;color:#000000;letter-spacing:0.333px;font-weight:700;text-shadow:0 0 2px #fff,0 0 2px #fff,1px 1px 0 #fff,-1px -1px 0 #fff,1px -1px 0 #fff,-1px 1px 0 #fff;left:2920.40px;">74d 15h</div>
</div></body></html>
